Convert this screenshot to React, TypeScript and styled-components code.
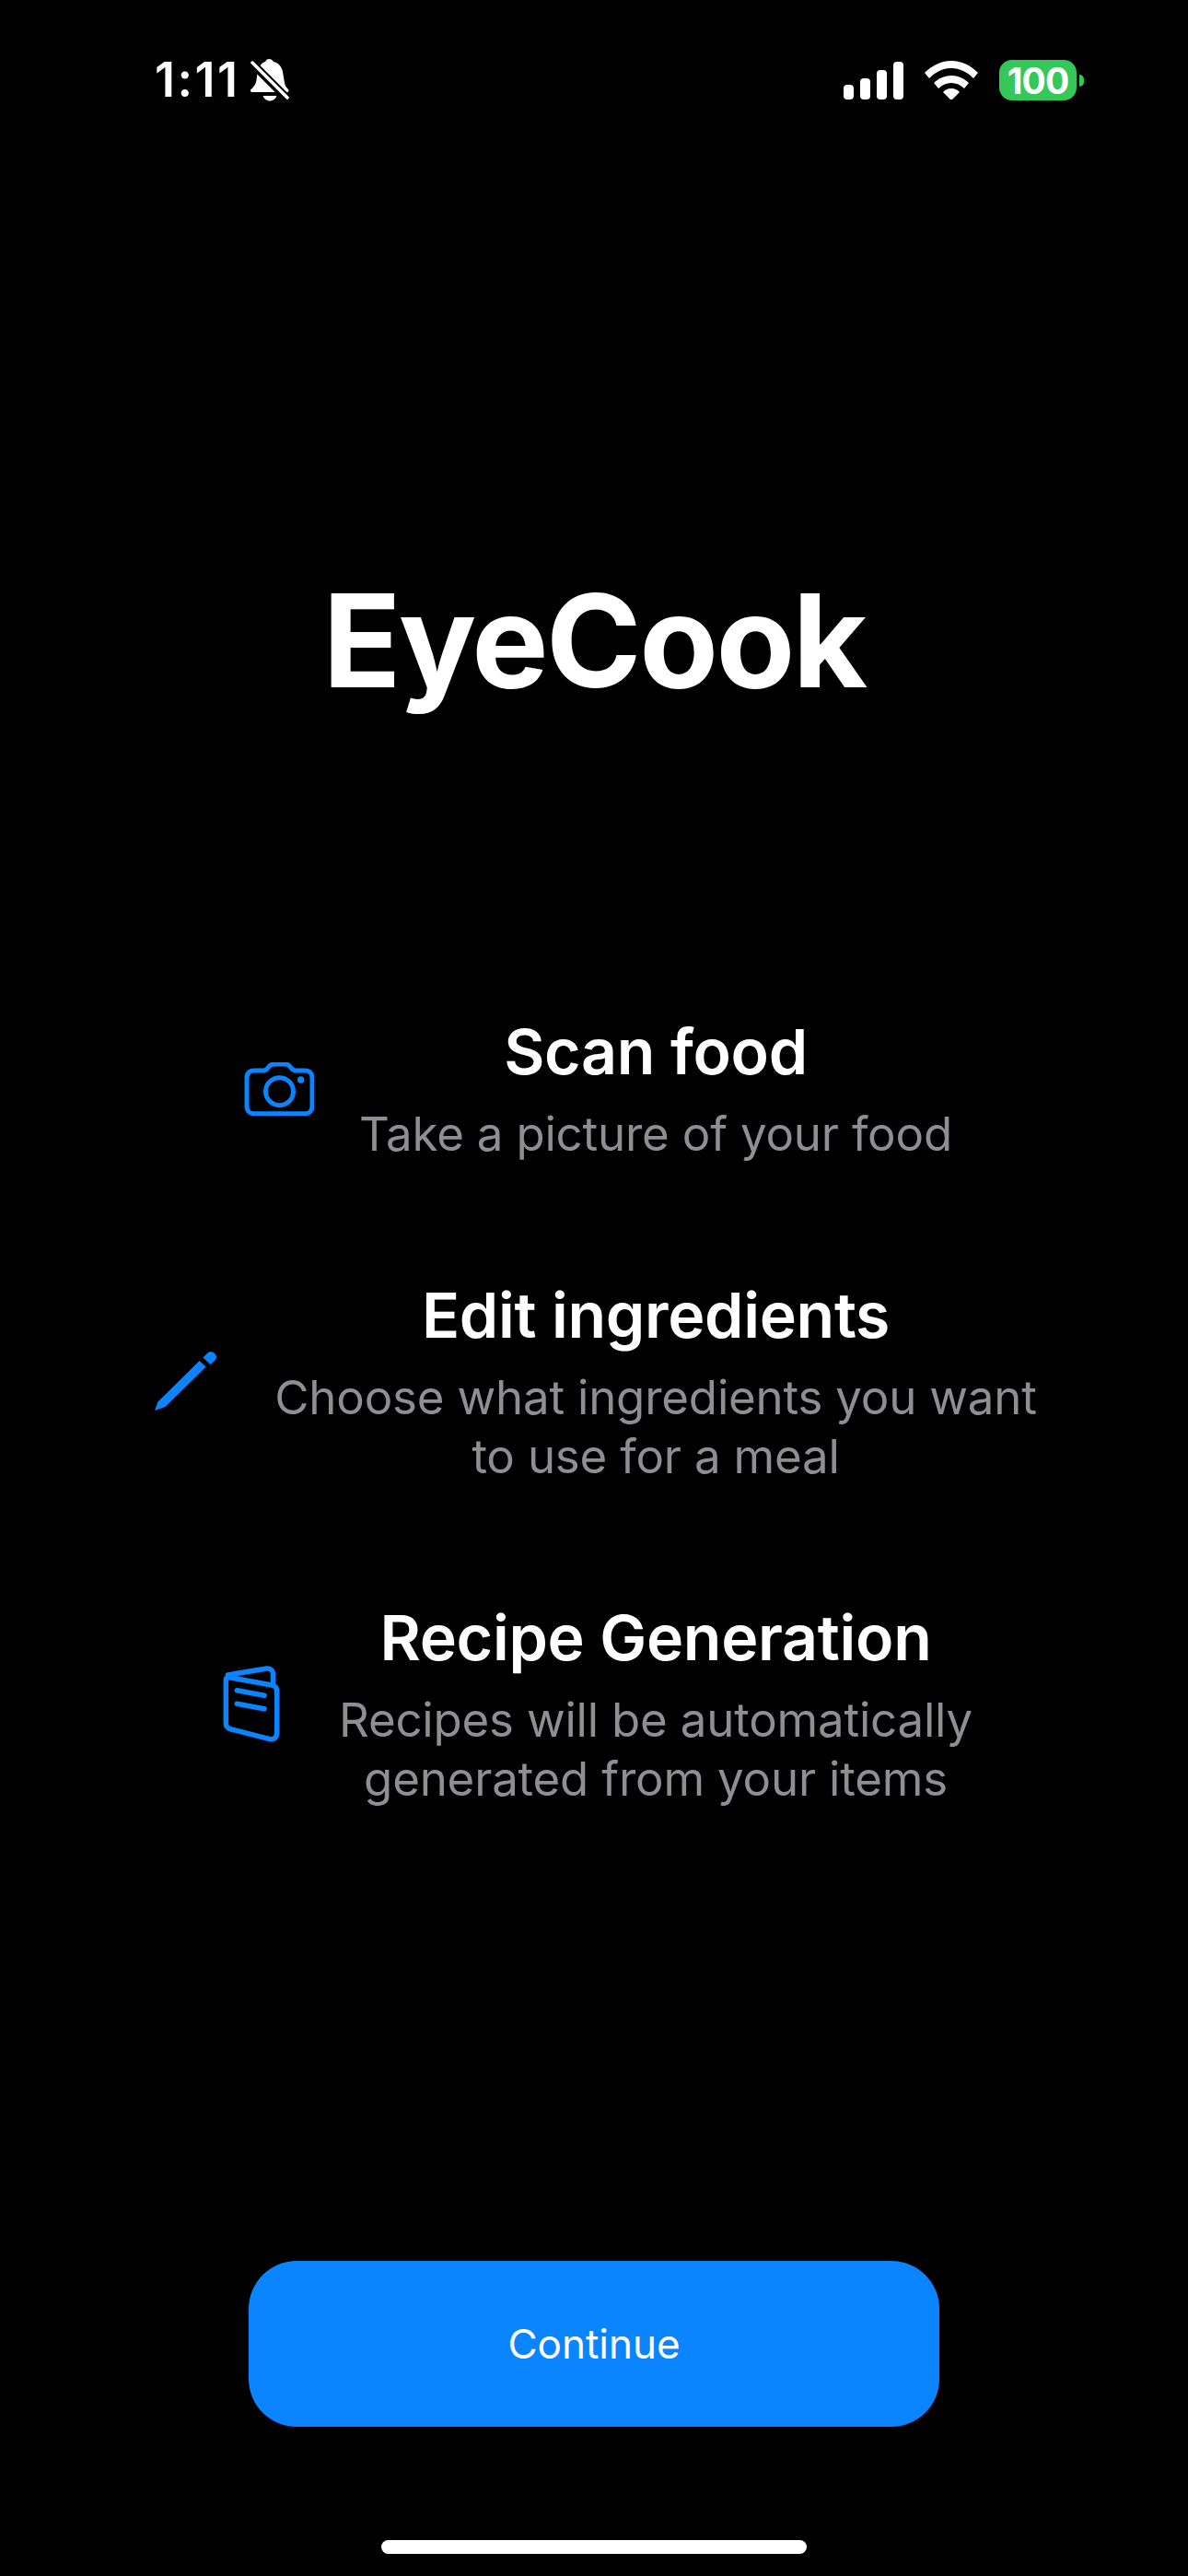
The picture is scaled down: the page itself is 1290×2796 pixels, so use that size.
import styled, { createGlobalStyle } from 'styled-components';

const GlobalStyle = createGlobalStyle`
  html, body {
    margin: 0;
    padding: 0;
    background: #000;
  }
  * {
    box-sizing: border-box;
  }
`;

const Screen = styled.div`
  width: 1290px;
  height: 2796px;
  background: #000;
  color: #fff;
  font-family: Inter, "Noto Sans", sans-serif;
  display: flex;
  flex-direction: column;
  align-items: center;
  overflow: hidden;
`;

const StatusBar = styled.div`
  width: 100%;
  height: 88px;
  margin-top: 43px;
  padding: 0 113px 0 168px;
  display: flex;
  align-items: center;
  justify-content: space-between;
`;

const StatusLeft = styled.div`
  display: flex;
  align-items: center;
  gap: 11px;
`;

const Time = styled.span`
  font-size: 52px;
  font-weight: 600;
  letter-spacing: 2.5px;
  line-height: 60px;
`;

const StatusRight = styled.div`
  display: flex;
  align-items: center;
  gap: 23px;
`;

const BatteryGroup = styled.div`
  display: flex;
  align-items: center;
  gap: 3px;
`;

const Battery = styled.div`
  width: 84px;
  height: 44px;
  background: #34c759;
  border-radius: 14px;
  display: flex;
  align-items: center;
  justify-content: center;
  font-size: 39px;
  font-weight: 700;
  letter-spacing: -1px;
  color: #fff;
`;

const BatteryNub = styled.div`
  width: 5px;
  height: 13px;
  background: #34c759;
  border-radius: 0 6px 6px 0;
`;

const AppTitle = styled.h1`
  margin: 479px 0 0;
  font-size: 140px;
  line-height: 170px;
  font-weight: 700;
  letter-spacing: -2.5px;
`;

const FeatureList = styled.div`
  margin-top: 320px;
  display: flex;
  flex-direction: column;
  align-items: center;
  gap: 123px;
`;

const FeatureRow = styled.div`
  display: flex;
  align-items: center;
  gap: 44px;
`;

const IconCell = styled.div`
  width: 90px;
  flex: none;
  display: flex;
  justify-content: center;
  color: #0a84ff;
`;

const FeatureText = styled.div`
  display: flex;
  flex-direction: column;
  align-items: center;
  text-align: center;
`;

const FeatureTitle = styled.div`
  font-size: 68px;
  line-height: 82px;
  margin-bottom: 17px;
  font-weight: 600;
  letter-spacing: -0.3px;
`;

const FeatureDesc = styled.div`
  font-size: 51px;
  line-height: 64px;
  font-weight: 400;
  letter-spacing: -0.2px;
  color: #8e8e93;
`;

const Spacer = styled.div`
  flex: 1;
`;

const ContinueButton = styled.button`
  width: 750px;
  height: 180px;
  border: none;
  border-radius: 52px;
  background: #0a84ff;
  color: #fff;
  font-family: inherit;
  font-size: 44px;
  font-weight: 400;
`;

const HomeIndicator = styled.div`
  width: 462px;
  height: 15px;
  margin: 123px 0 24px;
  background: #fff;
  border-radius: 8px;
`;

const BellSlash = () => (
  <svg width="42" height="46" viewBox="0 0 42 46">
    <path
      d="M20 0c2 0 4 1 5 3 5 1 9 5 10 11l2 12c.5 3 2 5 4 7 1 1 .5 3-1.5 3H2c-2 0-2.5-2-1.5-3 3-3 5-5 6-10l1-8C8 9 12 4 16 3c1-2 2-3 4-3Z"
      fill="#fff"
    />
    <path d="M13.500 40h15c-1 3-4 5.500-7.500 5.500S14.500 43 13.500 40Z" fill="#fff" />
    <path d="M0 3 42 45" stroke="#000" strokeWidth="9" />
    <path d="M2 4 40 42" stroke="#fff" strokeWidth="3.5" strokeLinecap="round" />
  </svg>
);

const SignalIcon = () => (
  <svg width="65" height="41" viewBox="0 0 65 41" fill="#fff">
    <rect x="0" y="25" width="11" height="16" rx="4" />
    <rect x="18" y="18" width="11" height="23" rx="4" />
    <rect x="36" y="9" width="11" height="32" rx="4" />
    <rect x="54" y="0" width="11" height="41" rx="4" />
  </svg>
);

const WifiIcon = () => (
  <svg width="58" height="42" viewBox="0 0 58 42" fill="#fff">
    <path d="M0 13C8 5 18 0 29 0s21 5 29 13l-5 6C46 12 38 8 29 8s-17 4-24 11Z" />
    <path d="M10 24c5-5 12-8 19-8s14 3 19 8l-5 6c-4-4-9-6-14-6s-10 2-14 6Z" />
    <path d="M20 34c2-2 5-4 9-4s7 2 9 4l-9 9Z" />
  </svg>
);

// blank strip on the left keeps the glyph where the reference has it
const CameraIcon = () => (
  <svg width="79" height="58" viewBox="-4 0 79 58" fill="none" stroke="currentColor" strokeWidth="5">
    <path d="M10 9h10c2.500 0 3.500-1 5-3 1.500-2.500 3-4 6-4h13c3 0 4.500 1.500 6 4 1.500 2 2.500 3 5 3h10c5 0 8 3 8 8v30.700c0 5-3 8-8 8H10c-5 0-8-3-8-8V17c0-5 3-8 8-8Z" />
    <circle cx="37.500" cy="31.700" r="15" />
    <circle cx="60.700" cy="19" r="3.700" fill="currentColor" stroke="none" />
  </svg>
);

// blank strip on the right, same reason
const PencilIcon = () => (
  <svg width="84" height="65" viewBox="0 0 84 65" fill="currentColor">
    <path d="M1 64 4.500 54.500 49.500 10 56.700 16.500 12.500 60Z" />
    <path d="M53.500 6.500 58.500 1.500C60.500-.5 64 0 66 2c2.500 2.500 2.500 5.500.5 7.500L61.500 14Z" />
  </svg>
);

const RecipeIcon = () => (
  <svg width="75" height="84" viewBox="0 0 75 84" fill="none" stroke="currentColor" strokeWidth="5.5" strokeLinecap="round" strokeLinejoin="round">
    <path d="M5.300 10 47.700 3c3.500-.5 6.800 2 6.800 6v9" />
    <path d="M3.300 15c0-2 2.500-2.500 5.400-2L53 21c3.500.7 5.700 3 5.700 6.500V73c0 4.500-3.200 7.500-7.700 6.700L9.300 69c-3.500-.8-6-2.500-6-6.500Z" />
    <path d="M15.300 26.700 45 32.300" />
    <path d="M15.300 41.300 45 46.700" />
  </svg>
);

const features = [
  {
    icon: <CameraIcon />,
    title: 'Scan food',
    desc: ['Take a picture of your food'],
  },
  {
    icon: <PencilIcon />,
    title: 'Edit ingredients',
    desc: ['Choose what ingredients you want', 'to use for a meal'],
  },
  {
    icon: <RecipeIcon />,
    title: 'Recipe Generation',
    desc: ['Recipes will be automatically', 'generated from your items'],
  },
];

const App = () => {
  return (
    <>
      <GlobalStyle />
      <Screen>
        <StatusBar>
          <StatusLeft>
            <Time>1:11</Time>
            <BellSlash />
          </StatusLeft>
          <StatusRight>
            <SignalIcon />
            <WifiIcon />
            <BatteryGroup>
              <Battery>100</Battery>
              <BatteryNub />
            </BatteryGroup>
          </StatusRight>
        </StatusBar>
        <AppTitle>EyeCook</AppTitle>
        <FeatureList>
          {features.map(f => (
            <FeatureRow key={f.title}>
              <IconCell>{f.icon}</IconCell>
              <FeatureText>
                <FeatureTitle>{f.title}</FeatureTitle>
                {f.desc.map(line => (
                  <FeatureDesc key={line}>{line}</FeatureDesc>
                ))}
              </FeatureText>
            </FeatureRow>
          ))}
        </FeatureList>
        <Spacer />
        <ContinueButton>Continue</ContinueButton>
        <HomeIndicator />
      </Screen>
    </>
  );
};

export default App;
